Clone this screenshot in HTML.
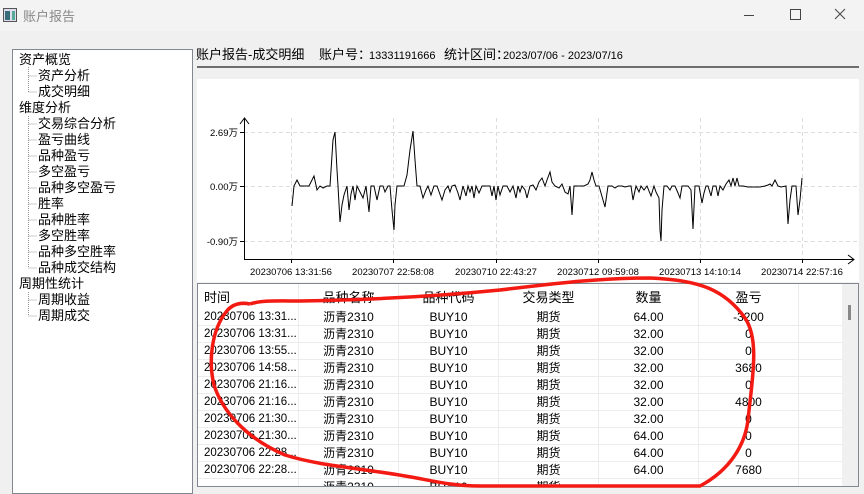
<!DOCTYPE html>
<html><head><meta charset="utf-8"><style>
*{margin:0;padding:0;box-sizing:border-box}
body{width:864px;height:488px;overflow:hidden;background:#f0f0f0;font-family:"Liberation Sans","Noto Sans CJK SC",sans-serif;font-size:12px;color:#000;position:relative}
.title{position:absolute;left:0;top:0;width:864px;height:31px;background:#f3f3f3}
.abs{position:absolute;white-space:nowrap}
.hd{position:absolute;top:46px;height:18px;line-height:18px;white-space:nowrap}
.tree{position:absolute;left:12px;top:49px;width:181px;height:445px;background:#fff;border:1px solid #828790}
.tree div{position:absolute;font-size:13px;line-height:16px;white-space:nowrap}
.tbl{position:absolute;left:197px;top:283px;width:662px;height:204px;background:#fff;border:1px solid #828790;overflow:hidden}
.row{position:absolute;left:0;height:17px;width:644px;border-bottom:1px solid #ececec}
.c{position:absolute;top:0;height:17px;line-height:17px;text-align:center;width:100px;border-right:1px solid #ececec;font-size:12px;white-space:nowrap;overflow:hidden}
</style></head><body>
<div class="title">
<svg class="abs" style="left:3px;top:8px" width="14" height="14"><rect x="0.5" y="0.5" width="13" height="13" fill="#dde" stroke="#555"/><rect x="2" y="3" width="5" height="9" fill="#3a6d7a"/><rect x="9" y="3" width="3" height="9" fill="#5a9"/></svg>
<div class="abs" style="left:23px;top:6px;font-size:13px;color:#888">账户报告</div>
<div class="abs" style="left:744px;top:15px;width:10px;height:1px;background:#444"></div>
<div class="abs" style="left:790px;top:9px;width:11px;height:11px;border:1px solid #444"></div>
<svg class="abs" style="left:834px;top:8px" width="12" height="12"><path d="M1 1L11 11M11 1L1 11" stroke="#444" stroke-width="1"/></svg>
</div>
<div class="tree">
<div style="left:6px;top:2px">资产概览</div>
<div style="left:25px;top:18px">资产分析</div>
<div style="left:25px;top:34px">成交明细</div>
<div style="left:6px;top:50px">维度分析</div>
<div style="left:25px;top:66px">交易综合分析</div>
<div style="left:25px;top:82px">盈亏曲线</div>
<div style="left:25px;top:98px">品种盈亏</div>
<div style="left:25px;top:114px">多空盈亏</div>
<div style="left:25px;top:130px">品种多空盈亏</div>
<div style="left:25px;top:146px">胜率</div>
<div style="left:25px;top:162px">品种胜率</div>
<div style="left:25px;top:178px">多空胜率</div>
<div style="left:25px;top:194px">品种多空胜率</div>
<div style="left:25px;top:210px">品种成交结构</div>
<div style="left:6px;top:226px">周期性统计</div>
<div style="left:25px;top:242px">周期收益</div>
<div style="left:25px;top:258px">周期成交</div>
<svg style="position:absolute;left:0;top:0" width="180" height="280"><g stroke="#999" stroke-dasharray="1 1" fill="none">
<path d="M15.5 17V42M15.5 26H24M15.5 42H24"/>
<path d="M15.5 66V218M15.5 74H24M15.5 90H24M15.5 106H24M15.5 122H24M15.5 138H24M15.5 154H24M15.5 170H24M15.5 186H24M15.5 202H24M15.5 218H24"/>
<path d="M15.5 242V266M15.5 250H24M15.5 266H24"/></g></svg>
</div>
<div class="hd" style="left:196px;font-size:13px">账户报告-成交明细</div>
<div class="hd" style="left:319px;font-size:13px">账户号：</div>
<div class="hd" style="left:369px;font-size:11px;top:47px">13331191666</div>
<div class="hd" style="left:444px;font-size:13px">统计区间：</div>
<div class="hd" style="left:503px;font-size:11px;top:47px">2023/07/06 - 2023/07/16</div>
<div class="abs" style="left:197px;top:66px;width:662px;height:2px;background:#6d6d6d"></div>
<div class="abs" style="left:197px;top:79px;width:662px;height:203px;background:#fff"></div>
<svg class="abs" style="left:0;top:0" width="864" height="488">
<g stroke="#ddd" stroke-dasharray="4 3">
<path d="M244 132.5H858M244 186.5H858M244 241.5H858"/>
<path d="M291.5 118V259M393.5 118V259M496.5 118V259M598.5 118V259M700.5 118V259M802.5 118V259"/></g>
<g stroke="#000" fill="none">
<path d="M244.5 259V118M240 124L244.5 118L249 124"/>
<path d="M244 259.5H854M848 255L854 259.5L848 264"/>
<path d="M240 132.5H244M240 186.5H244M240 241.5H244M291.5 259V263M393.5 259V263M496.5 259V263M598.5 259V263M700.5 259V263M802.5 259V263"/>
<polyline stroke-width="1" points="292,206 294,186 297,180 300,186 309,186 314,176 317,190 320,186 323,188 327,186 330,186 333,140 335,132 337,170 338,186 340,222 342,205 344,195 347,186 349,210 351,194 353,186 355,200 357,186 360,192 363,198 366,186 369,212 371,186 374,186 377,200 380,186 383,186 385,192 388,186 390,186 392,210 394,230 395,205 397,186 399,186 401,186 404,186 407,175 410,150 413,131 415,160 417,186 420,186 423,198 426,190 428,186 431,195 434,186 437,186 442,200 445,190 448,186 450,192 452,186 455,185 458,193 460,200 463,186 466,196 468,186 470,192 472,186 474,198 476,186 479,193 482,186 485,186 490,186 492,196 494,186 496,200 498,186 500,195 503,186 507,186 510,192 513,186 516,198 518,186 520,192 522,186 525,190 527,198 530,186 533,185 536,190 539,182 542,178 545,186 547,180 550,172 552,182 555,186 559,188 562,184 565,192 568,194 570,186 572,215 574,186 580,186 584,186 588,184 590,180 592,172 594,180 596,186 599,186 603,200 605,207 608,186 612,186 615,188 618,186 622,186 625,187 629,186 631,186 633,200 636,186 639,192 641,186 644,190 647,186 651,196 654,186 656,192 659,198 660,230 661,241 662,210 664,186 667,186 670,190 672,186 675,186 678,193 680,198 682,186 685,186 688,186 691,190 693,229 695,186 699,186 702,203 704,193 706,186 708,186 711,196 713,186 716,186 718,196 720,186 723,190 726,184 729,180 731,186 733,178 735,186 737,178 739,186 743,186 748,187 755,187 760,187 765,186 768,185 770,184 772,186 775,180 778,186 781,187 786,186 788,224 790,200 792,186 796,186 798,215 800,200 802,178"/>
</g>
<g font-size="9.5" font-family="Liberation Sans,Noto Sans CJK SC,sans-serif" fill="#000">
<text x="238" y="136" text-anchor="end">2.69万</text>
<text x="238" y="190" text-anchor="end">0.00万</text>
<text x="238" y="245" text-anchor="end">-0.90万</text>
<text x="291" y="275" text-anchor="middle">20230706 13:31:56</text>
<text x="393" y="275" text-anchor="middle">20230707 22:58:08</text>
<text x="496" y="275" text-anchor="middle">20230710 22:43:27</text>
<text x="598" y="275" text-anchor="middle">20230712 09:59:08</text>
<text x="700" y="275" text-anchor="middle">20230713 14:10:14</text>
<text x="802" y="275" text-anchor="middle">20230714 22:57:16</text>
</g></svg>
<div class="tbl">
<div class="row" style="top:0;height:25px;border-bottom:none">
<div class="c" style="left:0;width:101px;height:25px;line-height:28px;text-align:left;padding-left:6px;font-size:13px">时间</div>
<div class="c" style="left:101px;height:25px;line-height:28px;font-size:13px">品种名称</div>
<div class="c" style="left:201px;height:25px;line-height:28px;font-size:13px">品种代码</div>
<div class="c" style="left:301px;height:25px;line-height:28px;font-size:13px">交易类型</div>
<div class="c" style="left:401px;height:25px;line-height:28px;font-size:13px">数量</div>
<div class="c" style="left:501px;height:25px;line-height:28px;font-size:13px">盈亏</div>
</div>
<div id="rows"></div>
<div style="position:absolute;left:644px;top:0;width:17px;height:204px;background:#f0f0f0"></div>
<div style="position:absolute;left:650px;top:21px;width:3px;height:15px;background:#888"></div>
</div>
<script>
var d=[["13:31...","64.00","-3200"],["13:31...","32.00","0"],["13:55...","32.00","0"],["14:58...","32.00","3680"],["21:16...","32.00","0"],["21:16...","32.00","4800"],["21:30...","32.00","0"],["21:30...","64.00","0"],["22:28...","64.00","0"],["22:28...","64.00","7680"],["","",""]];
var h="";d.forEach(function(r,i){var t=25+i*17;h+='<div class="row" style="top:'+t+'px"><div class="c" style="left:0;text-align:left;padding-left:6px;width:101px;font-size:11.5px">'+(r[0]?'20230706 '+r[0]:'')+'</div><div class="c" style="left:101px">沥青2310</div><div class="c" style="left:201px">BUY10</div><div class="c" style="left:301px">期货</div><div class="c" style="left:401px">'+r[1]+'</div><div class="c" style="left:501px">'+r[2]+'</div></div>';});
document.getElementById("rows").innerHTML=h;
</script>
<svg class="abs" style="left:0;top:0" width="864" height="488"><path d="M250 304C240 302 232 304 226 312C212 330 208 360 214 385C222 410 245 438 285 455C320 466 360 468 405 476C430 480 450 486 480 486L700 486C730 470 745 445 748 420C752 380 760 340 745 318C725 290 700 280 650 278C600 278 560 283 500 290C430 297 360 300 300 301C280 301 262 300 250 304" fill="none" stroke="#f21a12" stroke-width="3.5"/></svg>
</body></html>
